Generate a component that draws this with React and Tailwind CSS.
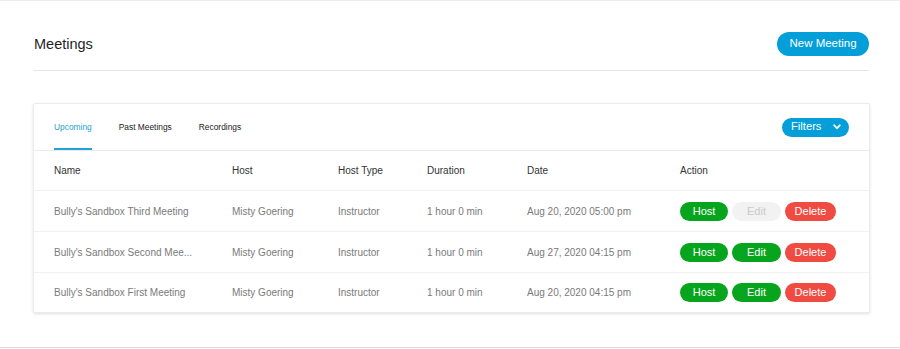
import React from "react";

const rows = [
  { name: "Bully's Sandbox Third Meeting", date: "Aug 20, 2020 05:00 pm", editDisabled: true },
  { name: "Bully's Sandbox Second Mee...", date: "Aug 27, 2020 04:15 pm", editDisabled: false },
  { name: "Bully's Sandbox First Meeting", date: "Aug 20, 2020 04:15 pm", editDisabled: false },
];

function Actions({ editDisabled }) {
  return (
    <div className="flex items-center gap-[4px]">
      <button className="w-[48px] h-[19px] rounded-full bg-[#07a51d] text-white text-[11px] leading-none flex items-center justify-center">
        Host
      </button>
      {editDisabled ? (
        <button className="w-[49px] h-[19px] rounded-full bg-[#f2f2f2] text-[#c9c9c9] text-[11px] leading-none flex items-center justify-center">
          Edit
        </button>
      ) : (
        <button className="w-[49px] h-[19px] rounded-full bg-[#07a51d] text-white text-[11px] leading-none flex items-center justify-center">
          Edit
        </button>
      )}
      <button className="w-[51px] h-[19px] rounded-full bg-[#f04b42] text-white text-[11px] leading-none flex items-center justify-center">
        Delete
      </button>
    </div>
  );
}

export default function App() {
  return (
    <div className="w-[900px] h-[349px] bg-white flex flex-col font-['Liberation_Sans',Arial,sans-serif] border-t border-[#ececec]">
      <div className="mt-[31px] h-[24px] flex items-center justify-between pl-[34px] pr-[31px]">
        <h1 className="text-[14.5px] text-[#1f1f1f] leading-none">Meetings</h1>
        <button className="w-[92px] h-[24px] rounded-full bg-[#049fd9] text-white text-[11.5px] leading-none flex items-center justify-center">
          New Meeting
        </button>
      </div>
      <div className="mt-[14px] ml-[34px] mr-[31px] h-px bg-[#e6e6e6]" />

      <div className="mt-[32px] ml-[33px] w-[837px] border border-[#ececec] rounded-[2px] bg-white shadow-[0_1px_3px_rgba(0,0,0,0.12)]">
        <div className="h-[47px] border-b border-[#ebebeb] flex items-stretch justify-between pl-[20px] pr-[20px]">
          <div className="flex items-stretch gap-[27px] text-[8.4px] text-[#1a1a1a]">
            <div className="flex items-center border-b-2 border-[#1fa3d3] text-[#27a2d0] pt-[2px]">Upcoming</div>
            <div className="flex items-center border-b-2 border-transparent pt-[2px]">Past Meetings</div>
            <div className="flex items-center border-b-2 border-transparent pt-[2px]">Recordings</div>
          </div>
          <div className="flex items-center">
            <button className="w-[67px] h-[19px] rounded-full bg-[#049fd9] text-white text-[11.2px] leading-none flex items-center pl-[9px] gap-[12px]">
              <span>Filters</span>
              <svg width="8" height="6" viewBox="0 0 8 6" fill="none">
                <path d="M1.2 1.3 L4 4.2 L6.8 1.3" stroke="white" strokeWidth="1.8" strokeLinecap="round" strokeLinejoin="round" />
              </svg>
            </button>
          </div>
        </div>

        <div className="grid grid-cols-[178px_106px_89px_100px_153px_1fr] pl-[20px] h-[40px] items-center border-b border-[#f1f1f1] text-[10px] text-[#333333]">
          <div>Name</div>
          <div>Host</div>
          <div>Host Type</div>
          <div>Duration</div>
          <div>Date</div>
          <div>Action</div>
        </div>

        {rows.map((r, i) => (
          <div
            key={i}
            className={
              i < rows.length - 1
                ? "grid grid-cols-[178px_106px_89px_100px_153px_1fr] pl-[20px] h-[41px] items-center border-b border-[#f1f1f1] text-[10px] text-[#7a7a7a]"
                : "grid grid-cols-[178px_106px_89px_100px_153px_1fr] pl-[20px] h-[39px] items-center text-[10px] text-[#7a7a7a]"
            }
          >
            <div className="whitespace-nowrap">{r.name}</div>
            <div>Misty Goering</div>
            <div>Instructor</div>
            <div>1 hour 0 min</div>
            <div className="whitespace-nowrap">{r.date}</div>
            <Actions editDisabled={r.editDisabled} />
          </div>
        ))}
      </div>

      <div className="mt-auto mb-[1px] h-px bg-[#dadada]" />
    </div>
  );
}
